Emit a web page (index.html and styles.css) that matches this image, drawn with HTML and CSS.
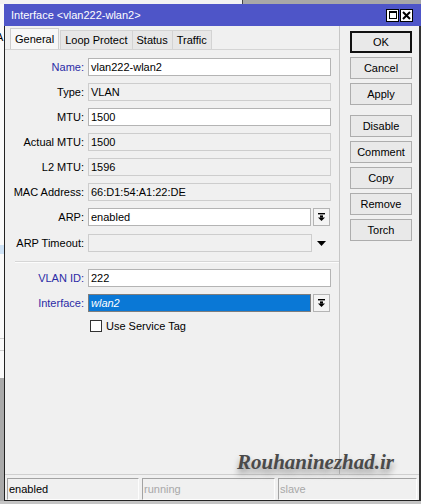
FILE: index.html
```html
<!DOCTYPE html>
<html>
<head>
<meta charset="utf-8">
<link rel="stylesheet" href="styles.css">
</head>
<body>
<div class="screen">
  <div class="desk-top"><div class="desk-top-a"></div><div class="desk-top-b"></div></div>
  <div class="desk-left">
    <div class="desk-left-a">
      <div class="dl-letter">A</div>
      <div class="dl-hl"></div>
      <div class="dl-line l1"></div>
      <div class="dl-line l2"></div>
    </div>
    <div class="desk-left-b"></div>
  </div>
  <div class="window">
    <div class="titlebar">
      <span class="title-text">Interface &lt;vlan222-wlan2&gt;</span>
      <div class="tb-btns">
        <div class="tb-btn"><div class="max-glyph"></div></div>
        <div class="tb-btn">
          <svg width="9" height="9" viewBox="0 0 9 9"><path d="M1 1 L8 8 M8 1 L1 8" stroke="#000" stroke-width="2" fill="none"/></svg>
        </div>
      </div>
    </div>
    <div class="body">
      <div class="main">
        <div class="left">
          <div class="tabs">
            <div class="tab active">General</div>
            <div class="tab">Loop Protect</div>
            <div class="tab">Status</div>
            <div class="tab">Traffic</div>
          </div>
          <div class="panel">
            <div class="form">
              <div class="lbl blue">Name:</div>
              <div class="field">vlan222-wlan2</div>
              <div class="lbl">Type:</div>
              <div class="field ro">VLAN</div>
              <div class="lbl">MTU:</div>
              <div class="field">1500</div>
              <div class="lbl">Actual MTU:</div>
              <div class="field ro">1500</div>
              <div class="lbl">L2 MTU:</div>
              <div class="field ro">1596</div>
              <div class="lbl">MAC Address:</div>
              <div class="field ro">66:D1:54:A1:22:DE</div>
              <div class="lbl">ARP:</div>
              <div class="combo">
                <div class="field">enabled</div>
                <div class="dd"><svg width="7" height="8" viewBox="0 0 7 8"><rect x="0" y="0" width="7" height="1.4" fill="#000"/><rect x="2" y="2.4" width="3" height="2.2" fill="#000"/><polygon points="0,4.4 7,4.4 3.5,8" fill="#000"/></svg></div>
              </div>
              <div class="lbl shift">ARP Timeout:</div>
              <div class="combo shift">
                <div class="field ro wide"></div>
                <div class="tri"><svg width="9" height="5" viewBox="0 0 9 5"><polygon points="0,0 9,0 4.5,5" fill="#000"/></svg></div>
              </div>
            </div>
            <div class="sep"></div>
            <div class="form form2">
              <div class="lbl blue">VLAN ID:</div>
              <div class="field">222</div>
              <div class="lbl blue">Interface:</div>
              <div class="combo">
                <div class="field sel">wlan2</div>
                <div class="dd"><svg width="7" height="8" viewBox="0 0 7 8"><rect x="0" y="0" width="7" height="1.4" fill="#000"/><rect x="2" y="2.4" width="3" height="2.2" fill="#000"/><polygon points="0,4.4 7,4.4 3.5,8" fill="#000"/></svg></div>
              </div>
              <div class="check-row">
                <div class="checkbox"></div>
                <span>Use Service Tag</span>
              </div>
            </div>
          </div>
        </div>
        <div class="right">
          <div class="btn default">OK</div>
          <div class="btn">Cancel</div>
          <div class="btn">Apply</div>
          <div class="btn gap">Disable</div>
          <div class="btn">Comment</div>
          <div class="btn">Copy</div>
          <div class="btn">Remove</div>
          <div class="btn">Torch</div>
        </div>
      </div>
      <div class="status">
        <div class="cell c1">enabled</div>
        <div class="cell c2 dim">running</div>
        <div class="cell c3 dim">slave</div>
      </div>
    </div>
  </div>
  <div class="desk-bottom"></div>
  <div class="wm">Rouhaninezhad.ir</div>
</div>
</body>
</html>
```
FILE: styles.css
```css
* { box-sizing: border-box; }
body {
  margin: 0;
  font-family: "Liberation Sans", Arial, sans-serif;
  font-size: 11px;
  color: #000;
}
.screen {
  position: relative;
  width: 421px;
  height: 504px;
  display: grid;
  grid-template-columns: 4px 417px;
  grid-template-rows: 4px 497px 3px;
  overflow: hidden;
  background: #c4c4c4;
}
.desk-top { grid-column: 1 / 3; display: flex; }
.desk-top-a { width: 243px; background: #f2f2f2; border-right: 1px solid #444; }
.desk-top-b { flex: 1; background: #a8a8a8; }
.desk-left { display: flex; flex-direction: column; overflow: hidden; }
.desk-left-a {
  height: 374px;
  background: #fafafa;
  display: flex;
  flex-direction: column;
  overflow: hidden;
}
.dl-letter { margin-top: 27px; margin-left: -4px; height: 13px; line-height: 13px; font-size: 11px; }
.dl-hl { margin-top: 201px; height: 9px; background: #cfe3f6; }
.dl-line { height: 1px; background: #cfcfcf; }
.dl-line.l1 { margin-top: 84px; }
.dl-line.l2 { margin-top: 11px; }
.desk-left-b { flex: 1; background: #a9a9a9; }
.desk-bottom { grid-column: 1 / 3; background: #c4c4c4; }

.window { display: flex; flex-direction: column; }
.titlebar {
  height: 22px;
  background: #4e55c8;
  display: flex;
  align-items: center;
  padding-left: 7px;
  color: #fff;
}
.title-text { font-size: 11px; }
.tb-btns { margin-left: auto; margin-right: 8px; display: flex; gap: 1px; }
.tb-btn {
  width: 13px;
  height: 13px;
  background: #fff;
  border: 1px solid #000;
  display: flex;
  align-items: center;
  justify-content: center;
}
.max-glyph { width: 8px; height: 8px; border: 1px solid #000; border-top-width: 2px; }

.body {
  flex: 1;
  background: #f0f0f0;
  border-left: 1px solid #222;
  border-right: 2px solid #333;
  border-bottom: 1px solid #222;
  display: flex;
  flex-direction: column;
}
.main { flex: 1; display: flex; }
.left {
  width: 335px;
  border-right: 1px solid #c6c6c6;
  display: flex;
  flex-direction: column;
}
.tabs {
  display: flex;
  align-items: flex-end;
  margin-top: 2px;
  padding-left: 5px;
  height: 21px;
}
.tab {
  height: 19px;
  line-height: 18px;
  padding: 0 4px;
  background: #e7e7e7;
  border: 1px solid #d3d3d3;
  border-bottom: none;
  margin-left: -1px;
}
.tab.active {
  height: 21px;
  line-height: 20px;
  background: #f7f7f7;
  border-color: #cdcdcd;
  margin-left: 0;
  margin-right: 2px;
}
.panel { flex: 1; border-top: 1px solid #d4d4d4; padding-top: 8px; }
.form {
  display: grid;
  grid-template-columns: 79px 243px;
  column-gap: 4px;
  row-gap: 7px;
}
.lbl { text-align: right; line-height: 18px; white-space: nowrap; }
.lbl.blue { color: #2b2ba6; }
.field {
  height: 18px;
  border: 1px solid #b4b4b4;
  background: #fff;
  padding-left: 2px;
  line-height: 16px;
  white-space: nowrap;
}
.field.ro { background: #f0f0f0; border-color: #cdcdcd; }
.field.sel { background: #0a78d6; color: #fff; font-style: italic; border-color: #7d7d7d; }
.combo { display: flex; gap: 2px; width: 242px; }
.combo .field { flex: 1; }
.dd {
  width: 17px;
  height: 18px;
  border: 1px solid #b4b4b4;
  background: #f4f4f4;
  display: flex;
  align-items: center;
  justify-content: center;
}
.tri { width: 17px; height: 18px; display: flex; align-items: center; justify-content: center; }
.combo .field.wide { margin-right: -1px; }
.shift { margin-top: 1px; }
.sep {
  margin: 9px 0 0 10px;
  height: 2px;
  border-top: 1px solid #d6d6d6;
  border-bottom: 1px solid #fcfcfc;
}
.form2 { margin-top: 6px; }
.check-row {
  grid-column: 2;
  display: flex;
  align-items: center;
  gap: 4px;
  padding-left: 2px;
  height: 13px;
}
.checkbox { width: 12px; height: 12px; border: 1px solid #333; background: #fff; }

.right {
  flex: 1;
  padding: 5px 0 0 10px;
  display: flex;
  flex-direction: column;
  gap: 4px;
}
.btn {
  width: 62px;
  height: 22px;
  border: 1px solid #adadad;
  background: #e9e9e9;
  text-align: center;
  line-height: 20px;
}
.btn.default { border: 2px solid #111; line-height: 18px; }
.btn.gap { margin-top: 6px; }

.status {
  height: 26px;
  border-top: 1px solid #cfcfcf;
  padding: 3px 2px 0 2px;
  display: flex;
  gap: 3px;
}
.cell {
  height: 22px;
  border: 1px solid;
  border-color: #a3a3a3 #fdfdfd #fdfdfd #a3a3a3;
  padding-left: 1px;
  line-height: 20px;
  white-space: nowrap;
}
.c1 { width: 132px; }
.c2 { width: 133px; }
.c3 { flex: 1; }
.dim { color: #a8a8a8; }

.wm {
  position: absolute;
  left: 237px;
  top: 450px;
  font-family: "Liberation Serif", serif;
  font-weight: bold;
  font-style: italic;
  font-size: 21px;
  color: #4a4a4a;
  text-shadow: 0 5px 6px rgba(0, 0, 0, 0.4);
  white-space: nowrap;
}
```
